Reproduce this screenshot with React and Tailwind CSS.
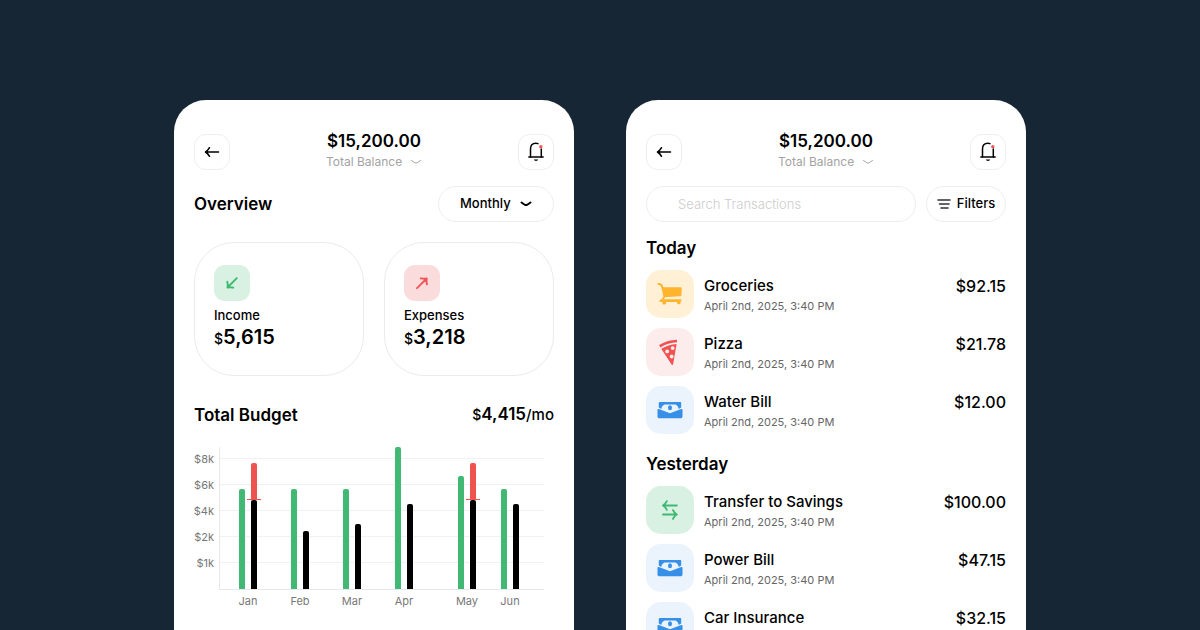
import React from "react";

const MONTHS = [
  { name: "Jan", x: 45, income: 100, spent: 89, over: 37, label: 54 },
  { name: "Feb", x: 97, income: 100, spent: 58, label: 106 },
  { name: "Mar", x: 149, income: 100, spent: 65, label: 158 },
  { name: "Apr", x: 201, income: 142, spent: 85, label: 210 },
  { name: "May", x: 264, income: 113, spent: 89, over: 37, label: 273 },
  { name: "Jun", x: 307, income: 100, spent: 85, label: 316 },
];

const TICKS = [
  { label: "$8k", y: 18 },
  { label: "$6k", y: 44 },
  { label: "$4k", y: 70 },
  { label: "$2k", y: 96 },
  { label: "$1k", y: 122 },
];

const SECTIONS = [
  {
    day: "Today",
    items: [
      { name: "Groceries", amount: "$92.15", kind: "cart" },
      { name: "Pizza", amount: "$21.78", kind: "pizza" },
      { name: "Water Bill", amount: "$12.00", kind: "bill" },
    ],
  },
  {
    day: "Yesterday",
    items: [
      { name: "Transfer to Savings", amount: "$100.00", kind: "transfer" },
      { name: "Power Bill", amount: "$47.15", kind: "bill" },
      { name: "Car Insurance", amount: "$32.15", kind: "bill" },
    ],
  },
];

function Chevron({ className }) {
  return (
    <svg viewBox="0 0 12 8" className={className} fill="none" stroke="currentColor" strokeLinecap="round" strokeLinejoin="round" aria-hidden="true">
      <path d="M1.500 2.500 L4.700 4.700 Q6 5.500 7.300 4.700 L10.500 2.500" />
    </svg>
  );
}

function BackIcon() {
  return (
    <svg viewBox="0 0 16 12" className="h-3 w-4" fill="none" stroke="#000" strokeWidth="1.5" strokeLinecap="round" strokeLinejoin="round" aria-hidden="true">
      <path d="M14.5 6H1.5M5.5 1.7C4.4 3.6 3.2 5 1.5 6c1.7 1 2.9 2.400 4 4.300" />
    </svg>
  );
}

function BellIcon() {
  return (
    <svg viewBox="0 0 20 22" className="h-[22px] w-5" fill="none" aria-hidden="true">
      <path d="M4.500 16V8C4.500 4.500 6.600 2.200 9.800 2.200c.8 0 1.500.1 2.200.4M15.300 8v8" stroke="#000" strokeWidth="1.500" strokeLinecap="round" />
      <path d="M2.300 16h15.400" stroke="#000" strokeWidth="1.500" />
      <path d="M7.700 18.600h4.600c-.4.900-1.200 1.300-2.300 1.300s-1.900-.4-2.300-1.300z" fill="#000" />
      <circle cx="14.800" cy="5.700" r="1.700" fill="#f25555" />
    </svg>
  );
}

function CartIcon() {
  return (
    <svg viewBox="0 0 26 24" className="h-6 w-[26px]" fill="#ffb42e" aria-hidden="true">
      <path d="M1.500 2c2.400-.2 3.300.8 3.800 3.200l2 8.700c.2 1-.2 1.700-1.200 2.600" fill="none" stroke="#ffb42e" strokeWidth="1.900" strokeLinecap="round" />
      <path d="M5.300 5.200h17.900c1 0 1.500.6 1.500 1.500l-.2 6c-.1 1-.6 1.500-1.600 1.600L7.200 15.300z" />
      <path d="M4.500 17.200h18.700c1.600 0 1.700 2.100.3 2.300a1.900 1.900 0 1 1-3.500.4H9a1.900 1.900 0 1 1-3.500 0H3c-1.200-1 0-2.700 1.500-2.700z" />
    </svg>
  );
}

function PizzaIcon() {
  return (
    <svg viewBox="0 0 24 28" className="h-7 w-6" aria-hidden="true">
      <path d="M1.100 6.900C6.300 3.900 12 2.100 18.900 1.700l.2 2.600C13 4.700 7.300 6.400 2.400 9.400z" fill="#f05252" />
      <path d="M3.200 10.800C8 7.900 13 6.400 18.600 6l-3.500 20.300c-.2.900-1 1.100-1.500.3z" fill="#f05252" />
      <circle cx="14.700" cy="10.100" r="1.900" fill="#fcecec" />
      <circle cx="9.200" cy="13.400" r="1.900" fill="#fcecec" />
      <circle cx="13.700" cy="18.500" r="1.900" fill="#fcecec" />
    </svg>
  );
}

function BillIcon() {
  return (
    <svg viewBox="0 0 26 18" className="h-[18px] w-[26px]" fill="#3690e8" aria-hidden="true">
      <path d="M2.600 1h20.800c.5 0 .8.300.8.800V6.500l-2.500 1.500c-.2-2-1.400-3.700-3.300-4.400H7.600c-1.900.7-3.100 2.400-3.300 4.400L1.800 6.500V1.800c0-.5.300-.8.800-.8z" />
      <ellipse cx="13" cy="6.800" rx="2" ry="2.500" />
      <path d="M.5 8.700c0-.7.700-1 1.300-.7L13 12.300 24.200 8c.6-.3 1.300 0 1.300.7v6.700c0 1.200-.8 1.800-1.800 1.800H2.300C1.300 17.200.5 16.600.5 15.400z" />
    </svg>
  );
}

function TransferIcon() {
  return (
    <svg viewBox="0 0 18 22" className="h-[22px] w-[18px]" fill="none" stroke="#3fb972" strokeWidth="1.900" strokeLinecap="round" strokeLinejoin="round" aria-hidden="true">
      <path d="M15.800 6.500H2M5.800 2.200C4.800 4.400 3.600 5.700 2 6.500c1.600.8 2.800 2.100 3.800 4.300M2 15.500h13.800M12 11.200c1 2.200 2.200 3.500 3.800 4.300-1.600.8-2.800 2.100-3.800 4.300" />
    </svg>
  );
}

const KINDS = {
  cart: { icon: CartIcon, tile: "bg-[#fff0d6]" },
  pizza: { icon: PizzaIcon, tile: "bg-[#fcecec]" },
  bill: { icon: BillIcon, tile: "bg-[#ebf3fd]" },
  transfer: { icon: TransferIcon, tile: "bg-[#d9f1e3]" },
};

function Screen({ label, children }) {
  return (
    <section aria-label={label} className="w-full max-w-[400px] rounded-t-[32px] bg-white px-5 pt-[30px]">
      {children}
    </section>
  );
}

function BalanceHeader() {
  const tile = "flex size-9 items-center justify-center rounded-[12px] border border-[#eeeeee]";
  return (
    <header className="flex items-center justify-between">
      <button type="button" aria-label="Back" className={tile}>
        <BackIcon />
      </button>
      <div className="w-24 pb-0.5">
        <p className="text-center text-[17px] leading-[22px] font-semibold">$15,200.00</p>
        <div className="relative text-[#a3a3a3]">
          <select aria-label="Balance shown" className="block h-5 w-full appearance-none bg-transparent text-[12px] leading-5">
            <option>Total Balance</option>
            <option>Savings</option>
          </select>
          <Chevron className="pointer-events-none absolute top-1.5 right-0 h-2 w-3 stroke-1" />
        </div>
      </div>
      <button type="button" aria-label="Notifications" className={tile}>
        <BellIcon />
      </button>
    </header>
  );
}

function StatCard({ label, value, tile, children }) {
  return (
    <article className="flex-1 rounded-[40px] border border-[#ebebeb] px-[19px] pt-[22px] pb-6">
      <div className={"flex size-9 items-center justify-center rounded-[11px] " + tile}>{children}</div>
      <p className="mt-1 text-[13px] leading-5 font-medium">{label}</p>
      <p className="text-[20px] leading-6 font-semibold">
        <span className="text-[14px] font-medium">$</span>
        {value}
      </p>
    </article>
  );
}

function BudgetChart() {
  return (
    <svg viewBox="0 0 360 176" className="mt-[13px] w-full" role="img" aria-label="Income and spending by month">
      {TICKS.map((t) => (
        <g key={t.label}>
          <rect x="26" y={t.y} width="324" height="1" fill="#f1f1f1" />
          <text x="20" y={t.y + 5} textAnchor="end" fontSize="11" fill="#777">
            {t.label}
          </text>
        </g>
      ))}
      <rect x="25" y="7" width="1" height="143" fill="#e8e8e8" />
      <rect x="25" y="149" width="325" height="1" fill="#e8e8e8" />
      {MONTHS.map((m) => {
        const top = 149 - m.spent;
        return (
          <g key={m.name}>
            <path d={`M${m.x} 149V${151 - m.income}q0-2 2-2h2q2 0 2 2V149z`} fill="#41b975" />
            <path d={`M${m.x + 12} 149V${top + 2}q0-2 2-2h2q2 0 2 2V149z`} fill="#000" />
            {m.over && (
              <g fill="#ef5350">
                <path d={`M${m.x + 12} ${top}V${top - m.over + 2}q0-2 2-2h2q2 0 2 2V${top}z`} />
                <rect x={m.x + 8} y={top - 1} width="14" height="1" />
              </g>
            )}
            <text x={m.label} y="165" textAnchor="middle" fontSize="11" fill="#777">
              {m.name}
            </text>
          </g>
        );
      })}
    </svg>
  );
}

function Overview() {
  return (
    <Screen label="Overview">
      <BalanceHeader />
      <div className="mt-3 flex items-center justify-between">
        <h2 className="text-[17px] leading-6 font-semibold">Overview</h2>
        <div className="relative">
          <select aria-label="Period" className="block h-9 w-[116px] appearance-none rounded-full border border-[#eeeeee] bg-white pl-[21px] text-[13px] font-medium">
            <option>Monthly</option>
            <option>Weekly</option>
          </select>
          <Chevron className="pointer-events-none absolute top-3.5 right-[22px] h-2 w-3 stroke-2" />
        </div>
      </div>
      <div className="mt-5 flex gap-5">
        <StatCard label="Income" value="5,615" tile="bg-[#d9f1e3]">
          <svg viewBox="0 0 14 14" className="size-3.5" fill="none" stroke="#3fb972" strokeWidth="1.900" strokeLinecap="round" strokeLinejoin="round" aria-hidden="true">
            <path d="M11.800 2.200 2.500 11.500M2.300 5.700C2.800 7.500 2.900 9.500 2.500 11.500c2-.4 4-.3 5.800.2" />
          </svg>
        </StatCard>
        <StatCard label="Expenses" value="3,218" tile="bg-[#fbdcdc]">
          <svg viewBox="0 0 14 14" className="size-3.5" fill="none" stroke="#f25555" strokeWidth="1.900" strokeLinecap="round" strokeLinejoin="round" aria-hidden="true">
            <path d="M2 12.200 11.700 2.500M5.800 2.300c1.900.5 3.900.6 5.900.2-.4 2-.3 4 .2 5.900" />
          </svg>
        </StatCard>
      </div>
      <div className="mt-[26px] flex items-center justify-between">
        <h2 className="text-[17px] leading-6 font-semibold">Total Budget</h2>
        <p className="text-[17px] leading-6 font-semibold">
          <span className="text-[14px] font-medium">$</span>4,415<span className="text-[15px] font-medium">/mo</span>
        </p>
      </div>
      <BudgetChart />
    </Screen>
  );
}

function Transaction({ name, amount, kind }) {
  const { icon: Icon, tile } = KINDS[kind];
  return (
    <li className="flex gap-2.5">
      <div className={"flex size-12 shrink-0 items-center justify-center rounded-[15px] " + tile}>
        <Icon />
      </div>
      <div className="flex-1 pt-1.5">
        <p className="text-[15px] leading-5 font-medium">{name}</p>
        <p className="mt-0.5 text-[11px] leading-4 text-[#666]">April 2nd, 2025, 3:40 PM</p>
      </div>
      <p className="pt-1.5 text-[16px] leading-5 font-medium">{amount}</p>
    </li>
  );
}

function Transactions() {
  return (
    <Screen label="Transactions">
      <BalanceHeader />
      <div className="mt-3 flex gap-2.5">
        <input
          type="search"
          aria-label="Search Transactions"
          placeholder="Search Transactions"
          className="h-9 min-w-0 flex-1 rounded-full border border-[#eeeeee] bg-white pr-4 pl-[31px] text-[13px] font-light placeholder:text-[#cccccc]"
        />
        <button type="button" className="flex h-9 w-20 items-center justify-center gap-1.5 rounded-full border border-[#eeeeee] text-[13px] font-medium">
          <svg viewBox="0 0 14 12" className="h-3 w-3.5" fill="none" stroke="#333" strokeWidth="1.600" strokeLinecap="round" aria-hidden="true">
            <path d="M1 2h12M2.500 6h9.500M4 10h7" />
          </svg>
          Filters
        </button>
      </div>
      <div className="mt-3.5 flex flex-col gap-[18px]">
        {SECTIONS.map((s) => (
          <div key={s.day}>
            <h2 className="text-[17px] leading-6 font-semibold">{s.day}</h2>
            <ul className="mt-2.5 flex flex-col gap-2.5">
              {s.items.map((t) => (
                <Transaction key={t.name} {...t} />
              ))}
            </ul>
          </div>
        ))}
      </div>
    </Screen>
  );
}

export default function App() {
  return (
    <main className="flex h-screen justify-center gap-[52px] overflow-hidden bg-[#172635] pt-[100px] font-['Inter',sans-serif] text-black">
      <Overview />
      <Transactions />
    </main>
  );
}
